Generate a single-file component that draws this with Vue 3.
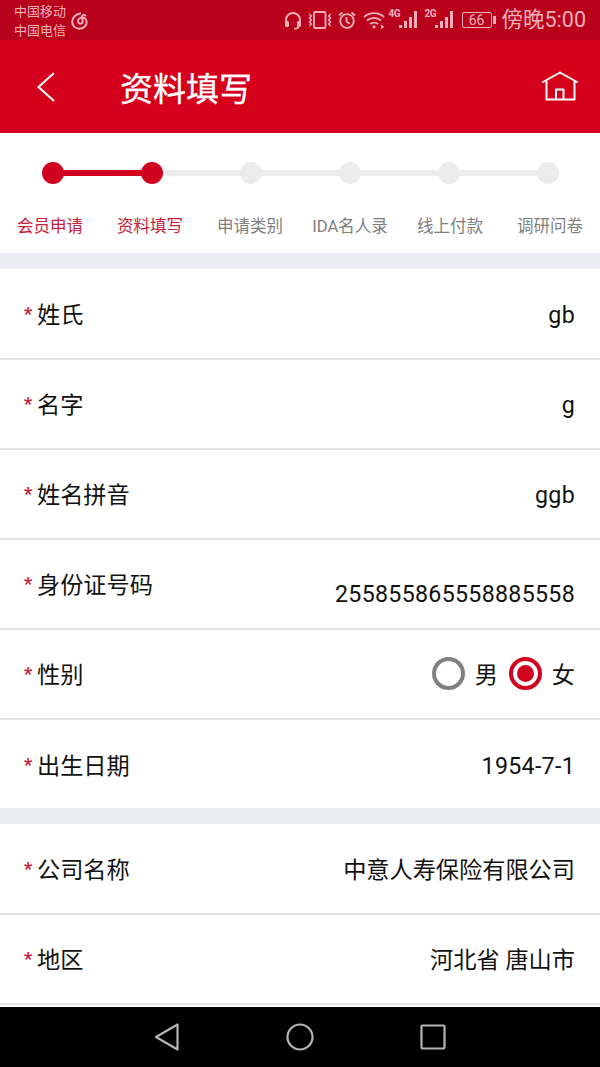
<script setup>
const steps = [
  { label: '会员申请', done: true },
  { label: '资料填写', done: true },
  { label: '申请类别' },
  { label: 'IDA名人录' },
  { label: '线上付款' },
  { label: '调研问卷' },
];
const groupOne = [
  { label: '姓氏', value: 'gb' },
  { label: '名字', value: 'g' },
  { label: '姓名拼音', value: 'ggb' },
  { label: '身份证号码', value: '255855865558885558', low: true },
  { label: '性别', radio: true },
  { label: '出生日期', value: '1954-7-1' },
];
const groupTwo = [
  { label: '公司名称', value: '中意人寿保险有限公司', cjk: true },
  { label: '地区', value: '河北省 唐山市', cjk: true },
];
</script>

<template>
  <div class="screen">
    <div class="status">
      <div class="carriers">
        <span>中国移动</span>
        <span>中国电信</span>
      </div>
      <svg class="netease" width="17" height="18" viewBox="0 0 17 18" fill="none" stroke="currentColor" stroke-width="2">
        <path d="M10 1.200C5.500 2.200 1.500 4.800 1.200 9.500c-.2 4 3 7.300 7.300 7.300 4 0 7.300-3 7.200-6.700-.1-3-2.600-5-5.200-4.600-2.500.4-4 2.700-3.300 4.800.6 1.700 2.900 2 4 .8 1-1.100.6-2.800-.2-5-.4-1.200 0-2.700 1.300-3 1-.2 1.900.2 2.500 1" />
      </svg>
      <div class="status-right">
        <svg width="18" height="19" viewBox="0 0 18 19" fill="none" stroke="currentColor" stroke-width="2">
          <path d="M2 13V9a7 7 0 0 1 14 0v4" />
          <rect x="1" y="10" width="4" height="6" rx="1.500" fill="currentColor" stroke="none" />
          <rect x="13" y="10" width="4" height="6" rx="1.500" fill="currentColor" stroke="none" />
          <path d="M15 15c-.4 2-2.500 2.700-5 2.700" stroke-width="1.600" />
        </svg>
        <svg width="24" height="18" viewBox="0 0 24 18" fill="none" stroke="currentColor" stroke-width="1.500">
          <rect x="6" y="1" width="11.500" height="16" rx="1" stroke-width="1.800" />
          <path d="M1.500 3l1.800 2-1.800 2 1.800 2-1.800 2 1.800 2-1.800 2M22.500 3l-1.800 2 1.800 2-1.800 2 1.800 2-1.800 2 1.800 2" />
        </svg>
        <svg width="18" height="18" viewBox="0 0 18 18" fill="none" stroke="currentColor" stroke-width="1.800">
          <circle cx="9" cy="10" r="6.800" />
          <path d="M8.500 6v4.500l3.200 2.300M1 4.500L4.500 1.500M17 4.500L13.500 1.500" />
        </svg>
        <svg class="wifi" width="22" height="18" viewBox="0 0 22 18" fill="none" stroke="currentColor" stroke-width="1.900">
          <path d="M1 6c5.500-5.200 14.500-5.200 20 0M4 9.500c3.800-3.400 10.200-3.400 14 0M7 13c2.200-1.800 5.800-1.800 8 0" />
          <circle cx="11" cy="15.800" r="1.600" fill="currentColor" stroke="none" />
          <path d="M18 13.500l3.500 2.300-3.500 2.300z" fill="currentColor" stroke="none" />
        </svg>
        <div class="signal first">
          <span class="net">4G</span>
          <i class="b1" /><i class="b2" /><i class="b3" /><i class="b4" />
        </div>
        <div class="signal second">
          <span class="net">2G</span>
          <i class="b1" /><i class="b2" /><i class="b3" /><i class="b4" />
        </div>
        <div class="battery"><span class="battery-body">66</span><i class="battery-cap" /></div>
        <span class="clock">傍晚5:00</span>
      </div>
    </div>

    <header class="topbar">
      <svg class="back" width="20" height="32" viewBox="0 0 20 32" fill="none" stroke="#fff" stroke-width="2">
        <path d="M18 2L2.500 16 18 30" />
      </svg>
      <h1 class="title">资料填写</h1>
      <svg class="home" width="36" height="30" viewBox="0 0 36 30" fill="none" stroke="#fff" stroke-width="2" stroke-linecap="round" stroke-linejoin="round">
        <path d="M1 11L18 1.500 35 11M4.500 10V28.500H32.500V10M14 28.500V18.500H21.500V28.500" />
      </svg>
    </header>

    <section class="stepper">
      <div class="track">
        <div v-for="(step, i) in steps" :key="step.label" class="node" :class="{ done: step.done, linked: i > 0 }">
          <span class="dot" />
        </div>
      </div>
      <div class="labels">
        <span v-for="step in steps" :key="step.label" class="step-label" :class="{ done: step.done }">{{ step.label }}</span>
      </div>
    </section>

    <div class="form-group">
      <div v-for="row in groupOne" :key="row.label" class="row">
        <span class="label"><em>*</em>{{ row.label }}</span>
        <div v-if="row.radio" class="radios">
          <span class="radio" />
          <span class="radio-text">男</span>
          <span class="radio on"><i /></span>
          <span class="radio-text">女</span>
        </div>
        <span v-else class="value" :class="{ low: row.low }">{{ row.value }}</span>
      </div>
    </div>

    <div class="form-group last">
      <div v-for="row in groupTwo" :key="row.label" class="row">
        <span class="label"><em>*</em>{{ row.label }}</span>
        <span class="value" :class="{ cjk: row.cjk }">{{ row.value }}</span>
      </div>
    </div>

    <nav class="softkeys">
      <svg width="26" height="30" viewBox="0 0 26 30" fill="none" stroke="#b4b4b4" stroke-width="2.200" stroke-linejoin="round">
        <path d="M23.500 2.500V27.500L2 15z" />
      </svg>
      <svg width="30" height="30" viewBox="0 0 30 30" fill="none" stroke="#b4b4b4" stroke-width="2.200">
        <circle cx="15" cy="15" r="12.500" />
      </svg>
      <svg width="26" height="26" viewBox="0 0 26 26" fill="none" stroke="#b4b4b4" stroke-width="2.200" stroke-linejoin="round">
        <rect x="1.500" y="1.500" width="23" height="23" rx="1" />
      </svg>
    </nav>
  </div>
</template>

<style>
html, body {
  margin: 0;
  background: #fff;
}
</style>

<style scoped>
.screen {
  width: 600px;
  height: 1067px;
  display: flex;
  flex-direction: column;
  overflow: hidden;
  background: #fff;
  font-family: "Roboto", "Noto Sans CJK SC", sans-serif;
}

.status {
  height: 40px;
  flex: none;
  display: flex;
  align-items: center;
  padding: 0 14px;
  box-sizing: border-box;
  background: #b9011c;
  color: #f3afb9;
}

.carriers {
  display: flex;
  flex-direction: column;
  font-size: 13px;
  line-height: 19px;
  margin-top: 1px;
}

.netease {
  margin: 1px 0 0 5px;
}

.status-right {
  margin-left: auto;
  display: flex;
  align-items: center;
  gap: 6px;
}

.wifi {
  margin-left: 1px;
}

.signal {
  position: relative;
  width: 29px;
  height: 20px;
}

.signal.first {
  margin-left: -2px;
}

.signal.second {
  margin-left: 1px;
}

.net {
  position: absolute;
  left: 0;
  top: -1px;
  font-size: 10px;
  line-height: 10px;
  font-weight: 700;
  letter-spacing: -0.500px;
}

.signal i {
  position: absolute;
  bottom: 2px;
  width: 3px;
  background: currentColor;
}

.signal .b1 { left: 10px; height: 3px; }
.signal .b2 { left: 15px; height: 7px; }
.signal .b3 { left: 20px; height: 11px; }
.signal .b4 { left: 25px; height: 17px; }

.battery {
  display: flex;
  align-items: center;
  margin-left: 2px;
}

.battery-body {
  width: 30px;
  height: 16px;
  box-sizing: border-box;
  border: 1px solid currentColor;
  border-radius: 2px;
  text-align: center;
  font-size: 14px;
  line-height: 14px;
}

.battery-cap {
  width: 2.500px;
  height: 8px;
  margin-left: 1.500px;
  background: currentColor;
}

.clock {
  font-size: 21.500px;
  line-height: 24px;
}

.topbar {
  height: 93px;
  flex: none;
  display: flex;
  align-items: center;
  padding: 0 22px 0 36px;
  box-sizing: border-box;
  background: #d5001b;
}

.title {
  margin: 0 0 0 64px;
  font-size: 33px;
  font-weight: 400;
  color: #fff;
  -webkit-text-stroke: 0.300px #fff;
}

.home {
  margin-left: auto;
  margin-top: -2px;
}

.stepper {
  flex: none;
  height: 120px;
  padding-top: 29px;
  box-sizing: border-box;
}

.track {
  display: flex;
  padding-left: 3px;
}

.node {
  position: relative;
  width: 99px;
  display: flex;
  justify-content: center;
}

.dot {
  width: 22px;
  height: 22px;
  border-radius: 50%;
  background: #ececec;
  position: relative;
  z-index: 1;
}

.node.linked::before {
  content: "";
  position: absolute;
  top: 8px;
  right: 50%;
  width: 99px;
  height: 6px;
  background: #ececec;
}

.node.done .dot,
.node.done.linked::before {
  background: #d0021f;
}

.labels {
  display: grid;
  grid-template-columns: repeat(6, 100px);
  margin-top: 31px;
}

.step-label {
  font-size: 16.500px;
  line-height: 24px;
  color: #808080;
  text-align: center;
  white-space: nowrap;
}

.step-label.done {
  color: #c5203a;
}

.form-group {
  flex: none;
  border-top: 16px solid #ecedf2;
  padding-top: 1px;
}

.form-group.last {
  flex: 1;
  min-height: 0;
}

.row {
  height: 90px;
  box-sizing: border-box;
  border-bottom: 2px solid #e4e4e4;
  padding: 0 25px 2px 24px;
  display: flex;
  align-items: center;
  justify-content: space-between;
  font-size: 23.200px;
  color: #111;
}

.form-group:not(.last) .row:last-child {
  height: 88px;
  padding-bottom: 0;
  border-bottom: 0;
}

.label {
  display: flex;
  align-items: center;
}

.label em {
  font-style: normal;
  font-size: 18px;
  font-weight: 700;
  width: 13px;
  color: #c5203a;
}

.value {
  margin-top: 3px;
  letter-spacing: 0.300px;
}

.value.cjk {
  margin-top: 0;
  letter-spacing: 0;
}

.value.low {
  margin-top: 22px;
}

.radios {
  display: flex;
  align-items: center;
}

.radio {
  width: 33px;
  height: 33px;
  box-sizing: border-box;
  border: 4px solid #808080;
  border-radius: 50%;
  display: flex;
  align-items: center;
  justify-content: center;
}

.radio.on {
  border-color: #d0021f;
}

.radio i {
  width: 17px;
  height: 17px;
  border-radius: 50%;
  background: #d0021f;
}

.radio-text {
  margin: 0 11px 0 10px;
}

.radio-text:last-child {
  margin: 0 0 0 10px;
}

.softkeys {
  height: 60px;
  flex: none;
  background: #000;
  display: flex;
  align-items: center;
  justify-content: center;
  gap: 105px;
}
</style>
